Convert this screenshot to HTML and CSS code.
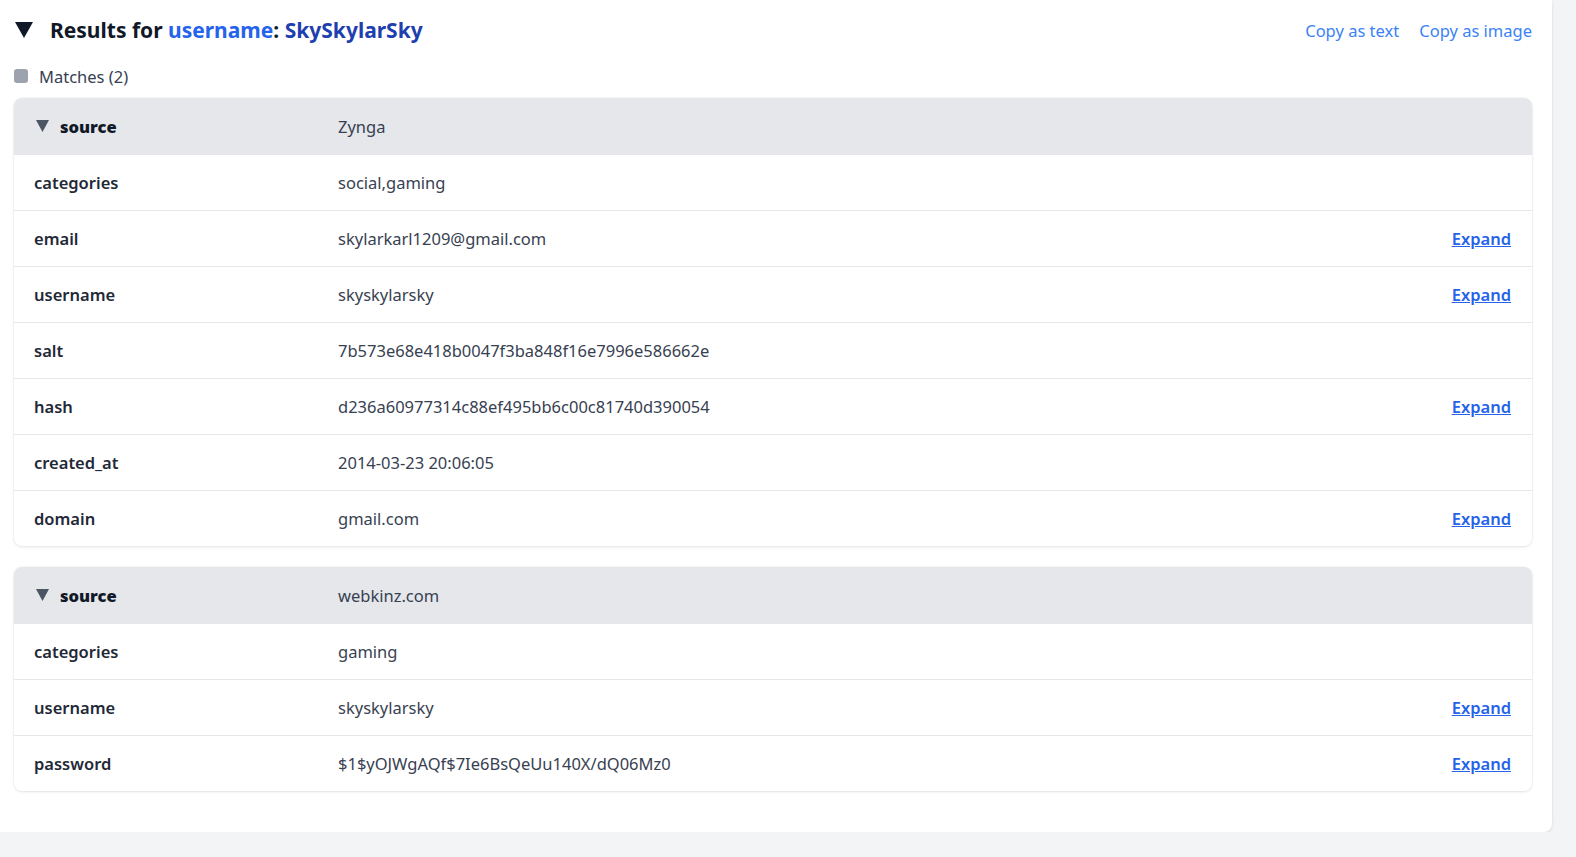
FILE: index.html
```html
<!DOCTYPE html>
<html lang="en">
  <head>
    <meta charset="UTF-8" />
    <meta name="viewport" content="width=device-width, initial-scale=1.0" />
    <title>Results</title>
    <link rel="stylesheet" href="styles.css">
  </head>
  <body>
    <div class="panel">
      <div class="titleBar">
        <h2 class="title"><svg class="caret" width="18" height="16" viewBox="0 0 18 16"><polygon points="0,0 18,0 9,16" fill="#111827" /></svg>Results for <span class="field">username</span>: <span class="term">SkySkylarSky</span></h2>
        <div class="actions">
          <a href="#" class="action">Copy as text</a>
          <a href="#" class="action">Copy as image</a>
        </div>
      </div>
      <div class="matches">
        <span class="box"></span>
        Matches (2)
      </div>

      <div class="card">
        <div class="row head">
          <div class="key"><svg class="tri" width="13" height="12" viewBox="0 0 13 12"><polygon points="0,0 13,0 6.5,12" fill="#4b5563" /></svg>source</div>
          <div class="val">Zynga</div>
          <div></div>
        </div>
        <div class="row">
          <div class="key">categories</div>
          <div class="val">social,gaming</div>
          <div></div>
        </div>
        <div class="row">
          <div class="key">email</div>
          <div class="val">skylarkarl1209@gmail.com</div>
          <a href="#" class="expand">Expand</a>
        </div>
        <div class="row">
          <div class="key">username</div>
          <div class="val">skyskylarsky</div>
          <a href="#" class="expand">Expand</a>
        </div>
        <div class="row">
          <div class="key">salt</div>
          <div class="val">7b573e68e418b0047f3ba848f16e7996e586662e</div>
          <div></div>
        </div>
        <div class="row">
          <div class="key">hash</div>
          <div class="val">d236a60977314c88ef495bb6c00c81740d390054</div>
          <a href="#" class="expand">Expand</a>
        </div>
        <div class="row">
          <div class="key">created_at</div>
          <div class="val">2014-03-23 20:06:05</div>
          <div></div>
        </div>
        <div class="row">
          <div class="key">domain</div>
          <div class="val">gmail.com</div>
          <a href="#" class="expand">Expand</a>
        </div>
      </div>

      <div class="card">
        <div class="row head">
          <div class="key"><svg class="tri" width="13" height="12" viewBox="0 0 13 12"><polygon points="0,0 13,0 6.5,12" fill="#4b5563" /></svg>source</div>
          <div class="val">webkinz.com</div>
          <div></div>
        </div>
        <div class="row">
          <div class="key">categories</div>
          <div class="val">gaming</div>
          <div></div>
        </div>
        <div class="row">
          <div class="key">username</div>
          <div class="val">skyskylarsky</div>
          <a href="#" class="expand">Expand</a>
        </div>
        <div class="row">
          <div class="key">password</div>
          <div class="val">$1$yOJWgAQf$7Ie6BsQeUu140X/dQ06Mz0</div>
          <a href="#" class="expand">Expand</a>
        </div>
      </div>
    </div>
  </body>
</html>
```

FILE: styles.css
```css
body {
  margin: 0;
  background-color: #f3f4f6;
  font-family: "Noto Sans", "Open Sans", sans-serif;
  color: #111827;
}
.panel {
  width: 1552px;
  box-sizing: border-box;
  background-color: white;
  padding: 12px 20px 41px 14px;
  border-radius: 0 0 8px 0;
  box-shadow: 0 1px 3px rgba(0, 0, 0, 0.12);
}
.titleBar {
  display: flex;
  justify-content: space-between;
  align-items: center;
  height: 36px;
}
.title {
  margin: 0;
  font-size: 21px;
  font-weight: 700;
}
.caret {
  margin: 0 17px 0 1px;
}
.field {
  color: #2563eb;
}
.term {
  color: #1e40af;
}
.actions {
  display: flex;
  gap: 20px;
}
.action {
  color: #3b82f6;
  text-decoration: none;
  font-size: 16.5px;
}
.matches {
  display: flex;
  align-items: center;
  gap: 11px;
  margin-top: 16px;
  font-size: 16.5px;
  color: #374151;
  height: 24px;
}
.box {
  width: 14px;
  height: 14px;
  border-radius: 3px;
  background-color: #9ca3af;
}
.card {
  margin-top: 10px;
  border-radius: 8px;
  overflow: hidden;
  box-shadow: 0 1px 3px rgba(0, 0, 0, 0.1), 0 0 0 1px rgba(0, 0, 0, 0.02);
}
.card + .card {
  margin-top: 21px;
}
.row {
  display: grid;
  grid-template-columns: 304px 1fr auto;
  align-items: center;
  height: 56px;
  padding: 0 21px 0 20px;
  font-size: 16.5px;
  border-top: 1px solid #e5e7eb;
  box-sizing: border-box;
}
.row.head {
  background-color: #e5e7eb;
  border-top: none;
}
.key {
  font-weight: 600;
  color: #1f2937;
}
.head .key {
  display: flex;
  align-items: center;
  font-weight: 900;
  color: #111827;
}
.tri {
  margin: 0 11px 0 2px;
}
.val {
  color: #374151;
}
.expand {
  color: #2563eb;
  font-weight: 600;
}
```
